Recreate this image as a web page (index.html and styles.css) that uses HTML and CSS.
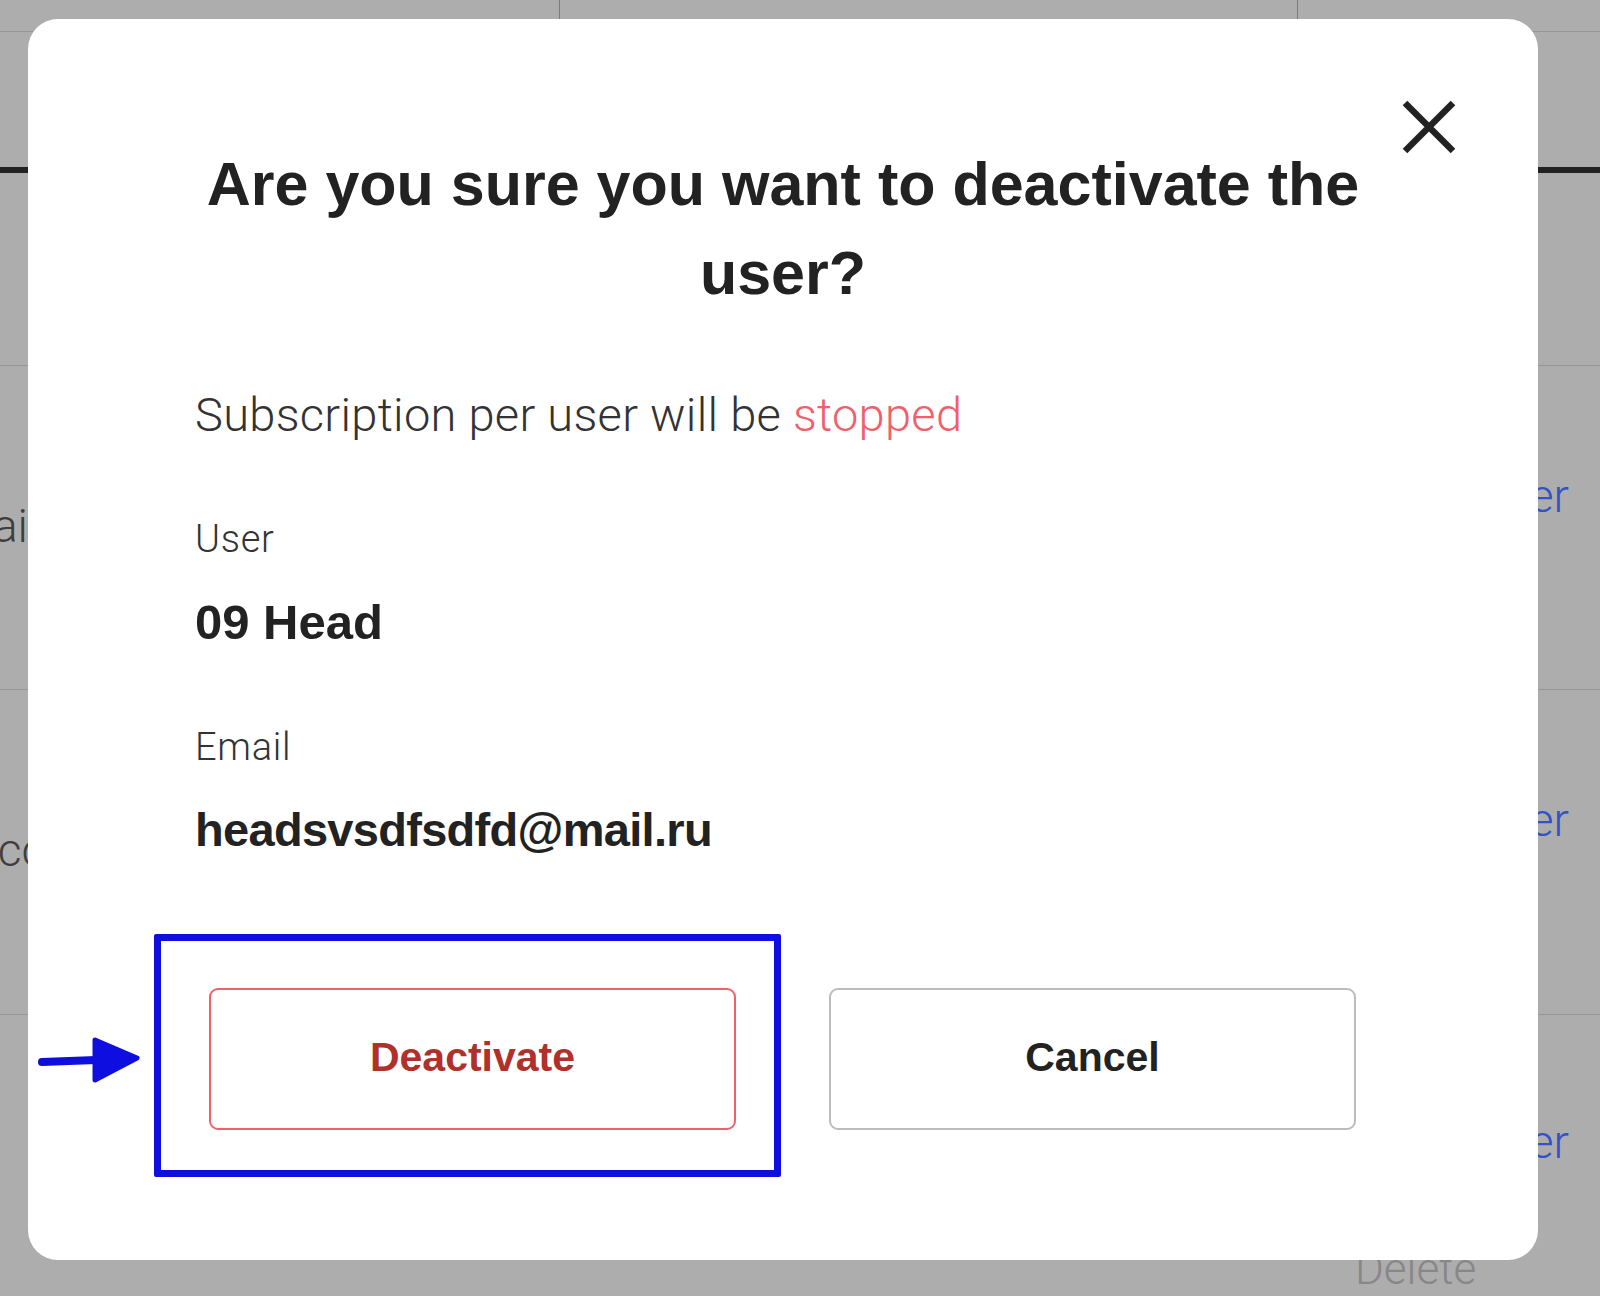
FILE: index.html
```html
<!DOCTYPE html>
<html lang="en">
<head>
<meta charset="utf-8">
<title>Deactivate user</title>
<link rel="stylesheet" href="styles.css">
</head>
<body>
<div class="page">
  <div class="strip"><div class="col"></div><div class="col"></div><div class="col"></div></div>
  <div class="hrow"></div>
  <div class="row r1"></div>
  <div class="row r2">
    <div class="lcell"><span class="bgtext frag-email">Email</span></div>
    <div class="rcell"><div class="link-row"><span class="bgtext link">Deactivate user</span></div></div>
  </div>
  <div class="row r3">
    <div class="lcell"><span class="bgtext frag-acc">Account</span></div>
    <div class="rcell"><div class="link-row"><span class="bgtext link">Deactivate user</span></div></div>
  </div>
  <div class="row r4">
    <div class="lcell"></div>
    <div class="rcell">
      <div class="link-row"><span class="bgtext link">Deactivate user</span></div>
      <div class="bgtext delete">Delete</div>
    </div>
  </div>
</div>

<div class="modal">
  <svg class="close" viewBox="0 0 58 58" aria-label="Close"><path d="M5 5L53 53M53 5L5 53" stroke="#222" stroke-width="6.5" fill="none"/></svg>
  <h1 class="title">Are you sure you want to deactivate the user?</h1>
  <p class="lead">Subscription per user will be <span class="stop">stopped</span></p>
  <div class="label">User</div>
  <div class="value value-name">09 Head</div>
  <div class="label label-email">Email</div>
  <div class="value value-email">headsvsdfsdfd@mail.ru</div>
  <div class="actions">
    <button class="btn btn-danger">Deactivate</button>
    <button class="btn btn-cancel">Cancel</button>
  </div>
</div>

<div class="annot-box"></div>
<svg class="annot-arrow" viewBox="0 0 110 54">
  <line x1="8" y1="28" x2="62" y2="26" stroke="#0e0ee0" stroke-width="8" stroke-linecap="round"/>
  <polygon points="61,6 103,24 61,46" fill="#0e0ee0" stroke="#0e0ee0" stroke-width="5" stroke-linejoin="round"/>
</svg>
</body>
</html>
```

FILE: styles.css
```css
html, body {
  margin: 0;
  height: 1296px;
  overflow: hidden;
}
body {
  background: #adadad;
  position: relative;
  font-family: Roboto, "Liberation Sans", sans-serif;
}

/* dimmed page behind the dialog */
.page {
  display: flex;
  flex-direction: column;
  height: 1296px;
}
.strip {
  display: grid;
  grid-template-columns: 559px 738px 1fr;
  height: 31px;
  border-bottom: 1px solid #969696;
}
.strip .col + .col {
  border-left: 1px solid #7c7c7c;
}
.hrow {
  height: 135px;
  border-bottom: 6px solid #222;
}
.row {
  display: flex;
  justify-content: space-between;
  border-bottom: 1px solid #969696;
}
.r1 { height: 193px; }
.r2 { height: 323px; }
.r3 { height: 325px; }
.r4 { flex: 1; border-bottom: none; }

.lcell {
  padding-top: 133px;
  white-space: nowrap;
}
.rcell {
  width: 240px;
  padding-top: 103px;
  display: flex;
  flex-direction: column;
}
.r4 .rcell { padding-top: 100px; }
.link-row {
  display: flex;
  justify-content: flex-end;
  padding-right: 31px;
  white-space: nowrap;
}
.bgtext {
  font: 300 46px/54px Roboto, "Liberation Sans", sans-serif;
  color: #3e3e3e;
}
.frag-email { display: inline-block; margin-left: -74px; }
.frag-acc { display: inline-block; margin-left: -31px; }
.link { color: #3552c4; }
.delete {
  margin-top: 73px;
  margin-left: -5px;
  font-size: 44px;
  color: #878787;
  white-space: nowrap;
}

/* dialog */
.modal {
  position: absolute;
  left: 28px;
  top: 19px;
  width: 1510px;
  box-sizing: border-box;
  padding: 121px 167px 130px;
  background: #fff;
  border-radius: 30px;
}
.close {
  position: absolute;
  left: 1372px;
  top: 79px;
  width: 58px;
  height: 58px;
}
.title {
  margin: 0;
  text-align: center;
  font: 700 61px/89px "Liberation Sans", Arial, sans-serif;
  color: #222;
}
.lead {
  margin: 69px 0 0;
  font: 300 47px/56px Roboto, "Liberation Sans", sans-serif;
  letter-spacing: 0.3px;
  color: #333;
}
.lead .stop { color: #f0606c; }
.label {
  margin-top: 74px;
  font: 300 38px/44px Roboto, "Liberation Sans", sans-serif;
  letter-spacing: 0.7px;
  color: #333;
}
.label-email { margin-top: 75px; }
.value {
  margin-top: 33px;
  font: 700 47px/56px "Liberation Sans", Arial, sans-serif;
  color: #222;
}
.value-name { font-size: 49px; }
.value-email { letter-spacing: -0.7px; }

.actions {
  margin: 130px 15px 0 14px;
  display: grid;
  grid-template-columns: 1fr 1fr;
  column-gap: 93px;
}
.btn {
  height: 142px;
  box-sizing: border-box;
  border-radius: 9px;
  background: #fff;
  display: flex;
  align-items: center;
  justify-content: center;
  font: 700 41px "Liberation Sans", Arial, sans-serif;
  padding: 0 0 4px;
}
.btn-danger {
  border: 2px solid #f0606c;
  color: #b0302b;
}
.btn-cancel {
  border: 2px solid #bcbcbc;
  color: #222;
}

/* annotation overlay */
.annot-box {
  position: absolute;
  left: 154px;
  top: 934px;
  width: 627px;
  height: 243px;
  box-sizing: border-box;
  border: 7px solid #0e0ee0;
  border-radius: 2px;
}
.annot-arrow {
  position: absolute;
  left: 34px;
  top: 1034px;
  width: 110px;
  height: 54px;
}
```
